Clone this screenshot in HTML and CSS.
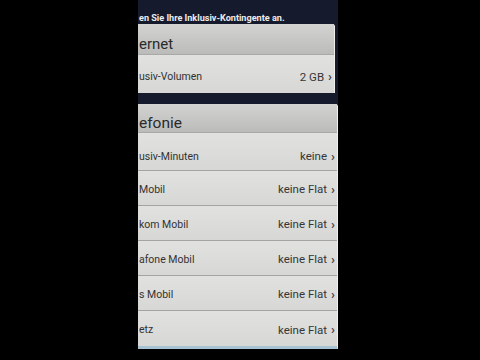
FILE: index.html
```html
<!DOCTYPE html>
<html lang="de">
<head>
<meta charset="utf-8">
<title>Inklusiv-Kontingente</title>
<link rel="stylesheet" href="styles.css">
</head>
<body>
<div class="stage">
  <div class="bezel"></div>
  <div class="screen">
    <p class="intro">en Sie Ihre Inklusiv-Kontingente an.</p>
    <section class="card card-internet">
      <h2 class="card-head">ernet</h2>
      <div class="row row-tall"><span class="label">usiv-Volumen</span><span class="value">2 GB<span class="chev">›</span></span></div>
    </section>
    <section class="card card-tel">
      <h2 class="card-head head-tel">efonie</h2>
      <div class="row row-first"><span class="label">usiv-Minuten</span><span class="value">keine<span class="chev">›</span></span></div>
      <div class="row"><span class="label">Mobil</span><span class="value">keine Flat<span class="chev">›</span></span></div>
      <div class="row"><span class="label">kom Mobil</span><span class="value">keine Flat<span class="chev">›</span></span></div>
      <div class="row"><span class="label">afone Mobil</span><span class="value">keine Flat<span class="chev">›</span></span></div>
      <div class="row"><span class="label">s Mobil</span><span class="value">keine Flat<span class="chev">›</span></span></div>
      <div class="row row-last"><span class="label">etz</span><span class="value">keine Flat<span class="chev">›</span></span></div>
    </section>
  </div>
</div>
</body>
</html>
```

FILE: styles.css
```css
* { box-sizing: border-box; }
html, body {
  margin: 0;
  padding: 0;
  background: #000;
  width: 480px;
  height: 360px;
  overflow: hidden;
}
.stage {
  display: flex;
  height: 360px;
}
.bezel {
  flex: none;
  width: 138px;
  background: #000;
}
.screen {
  flex: none;
  width: 200px;
  height: 349px;
  background: #151a2d;
  overflow: hidden;
  display: flex;
  flex-direction: column;
  font-family: Roboto, "Open Sans", sans-serif;
}
.intro {
  margin: 0;
  padding: 13px 0 0 1px;
  height: 25px;
  font-size: 9.1px;
  line-height: 11px;
  font-weight: 700;
  color: #ececef;
  white-space: nowrap;
}
.card {
  margin-right: 3px;
  background: #dcdcda;
  border-radius: 0 3px 0 0;
  border-right: 1px solid #eef0ef;
}
.card-internet {
  height: 69px;
}
.card-tel {
  margin-top: 11px;
  margin-right: 0;
  border-bottom: 4px solid #a9c2d1;
  flex: 1;
}
.card-head {
  margin: 0;
  height: 31px;
  padding: 0 0 0 1px;
  display: flex;
  align-items: flex-end;
  font-size: 15px;
  line-height: 19px;
  font-weight: 400;
  color: #2a2a2a;
  background: linear-gradient(#d3d4d2, #bbbcba);
  border-bottom: 1px solid #a9aaa8;
  white-space: nowrap;
}
.head-tel {
  height: 29px;
  font-size: 15.5px;
  line-height: 17px;
}
.row {
  height: 35px;
  display: flex;
  align-items: center;
  justify-content: space-between;
  padding: 2px 2px 0 1px;
  font-size: 10.5px;
  color: #323232;
  background: linear-gradient(#e1e1df, #d7d7d5);
  border-bottom: 1px solid #a4a4a2;
  white-space: nowrap;
}
.row-tall {
  height: 38px;
  padding-top: 5px;
  border-bottom: none;
}
.row-first {
  height: 38px;
  padding-top: 9px;
}
.row-last {
  border-bottom: none;
}
.value {
  display: flex;
  align-items: center;
  gap: 4px;
  font-size: 11.5px;
  font-weight: 400;
  color: #363636;
}
.chev {
  font-weight: 700;
  font-size: 13px;
  color: #444;
}
```
